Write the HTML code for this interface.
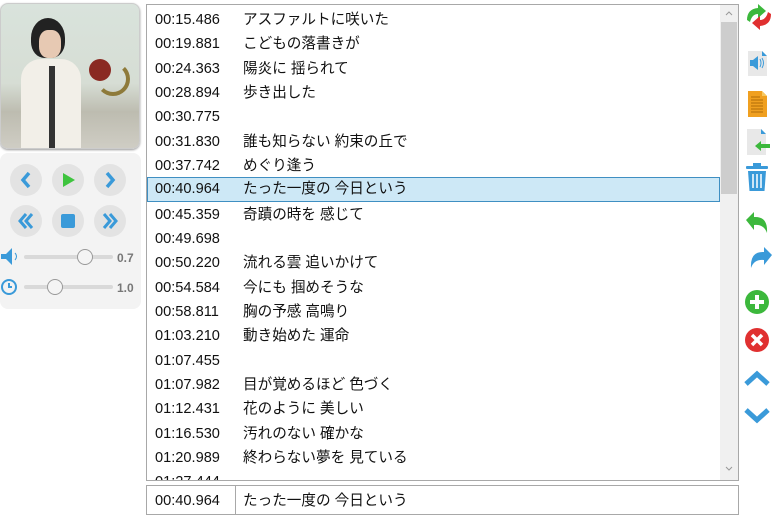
<!DOCTYPE html>
<html><head><meta charset="utf-8"><style>
*{margin:0;padding:0;box-sizing:border-box}
body{width:774px;height:518px;background:#fff;position:relative;overflow:hidden;font-family:"Liberation Sans","Noto Sans CJK JP",sans-serif;color:#111}
.art{position:absolute;left:0;top:3px;width:140px;height:146px;border-radius:8px;overflow:hidden;border:1px solid #ccc;background:linear-gradient(180deg,#d9e3dc 0%,#d6ddd4 55%,#bdbcb0 75%,#cfcdc4 100%);box-shadow:0 1px 2px #999}
.panel{position:absolute;left:0;top:153px;width:141px;height:156px;background:#f3f3f3;border-radius:8px}
.btn{position:absolute;width:32px;height:32px;border-radius:50%;background:#e3e3e3}
.list{position:absolute;left:146px;top:4px;width:593px;height:477px;border:1px solid #a8a8a8;overflow:hidden}
.rows{position:absolute;left:0;top:2px;width:573px;height:475px}
.row{position:absolute;left:0;height:24px;width:573px;font-size:14.6px;line-height:24px}
.row .t{position:absolute;left:8px}
.row .l{position:absolute;left:96px}
.sel{background:#cde8f6;border:1px solid #3f8fc2}
.sb{position:absolute;left:573px;top:0;width:18px;height:475px;background:#f0f0f0}
.thumb{position:absolute;left:1px;top:17px;width:16px;height:172px;background:#cdcdcd}
.bot{position:absolute;left:146px;top:485px;width:593px;height:30px;border:1px solid #a8a8a8;font-size:14.6px;line-height:30px}
.ic{position:absolute;left:744px}
</style></head><body>
<div class="art">
 <div style="position:absolute;left:20px;top:55px;width:60px;height:95px;background:#f2efe8;border-radius:20px 20px 0 0"></div>
 <div style="position:absolute;left:48px;top:62px;width:6px;height:90px;background:#333"></div>
 <div style="position:absolute;left:30px;top:14px;width:34px;height:40px;background:#222;border-radius:50% 50% 40% 40%"></div>
 <div style="position:absolute;left:38px;top:26px;width:22px;height:28px;background:#e7c9b3;border-radius:40%"></div>
 <div style="position:absolute;left:88px;top:55px;width:22px;height:22px;background:#8a2a22;border-radius:50%"></div>
 <div style="position:absolute;left:95px;top:58px;width:34px;height:34px;border-radius:50%;border:4px solid #8e7a3a;border-left-color:transparent;border-top-color:transparent"></div>
</div>
<div class="panel">
 <div class="btn" style="left:10px;top:11px"></div><div class="btn" style="left:52px;top:11px"></div><div class="btn" style="left:94px;top:11px"></div>
 <div class="btn" style="left:10px;top:52px"></div><div class="btn" style="left:52px;top:52px"></div><div class="btn" style="left:94px;top:52px"></div>
 <svg width="141" height="156" style="position:absolute;left:0;top:0">
  <path d="M29 20 L23 27 L29 34" fill="none" stroke="#3a9ad9" stroke-width="3.5"/>
  <path d="M63 20 L75 27 L63 34 Z" fill="#3ec43e"/>
  <path d="M107 20 L113 27 L107 34" fill="none" stroke="#3a9ad9" stroke-width="3.5"/>
  <path d="M26 61 L20 68 L26 75 M32 61 L26 68 L32 75" fill="none" stroke="#3a9ad9" stroke-width="3"/>
  <rect x="61" y="61" width="14" height="14" rx="2" fill="#3a9ad9"/>
  <path d="M104 61 L110 68 L104 75 M110 61 L116 68 L110 75" fill="none" stroke="#3a9ad9" stroke-width="3"/>
  <path d="M1 101 h5 l6 -6 v17 l-6 -6 h-5z" fill="#3a9ad9"/>
  <path d="M15 100 q3 3.5 0 7" fill="none" stroke="#3a9ad9" stroke-width="1"/>
  <line x1="26" y1="104" x2="111" y2="104" stroke="#d9d9d9" stroke-width="4" stroke-linecap="round"/>
  <circle cx="85" cy="104" r="7.5" fill="#f4f4f4" stroke="#999"/>
  <text x="117" y="109" font-size="12" font-weight="bold" fill="#777" font-family="Liberation Sans">0.7</text>
  <circle cx="9" cy="134" r="7" fill="none" stroke="#3a9ad9" stroke-width="2"/>
  <path d="M9 130 v4 h3" fill="none" stroke="#3a9ad9" stroke-width="2"/>
  <line x1="26" y1="134" x2="111" y2="134" stroke="#d9d9d9" stroke-width="4" stroke-linecap="round"/>
  <circle cx="55" cy="134" r="7.5" fill="#f4f4f4" stroke="#999"/>
  <text x="117" y="139" font-size="12" font-weight="bold" fill="#777" font-family="Liberation Sans">1.0</text>
 </svg>
</div>
<div class="list">
 <div class="rows">
 <div class="row" style="top:1px"><span class="t">00:15.486</span><span class="l">アスファルトに咲いた</span></div>
 <div class="row" style="top:25.3px"><span class="t">00:19.881</span><span class="l">こどもの落書きが</span></div>
 <div class="row" style="top:49.6px"><span class="t">00:24.363</span><span class="l">陽炎に 揺られて</span></div>
 <div class="row" style="top:74px"><span class="t">00:28.894</span><span class="l">歩き出した</span></div>
 <div class="row" style="top:98.3px"><span class="t">00:30.775</span><span class="l"></span></div>
 <div class="row" style="top:122.6px"><span class="t">00:31.830</span><span class="l">誰も知らない 約束の丘で</span></div>
 <div class="row" style="top:147px"><span class="t">00:37.742</span><span class="l">めぐり逢う</span></div>
 <div class="row sel" style="top:170.3px;height:25px;line-height:23px"><span class="t" style="left:7px">00:40.964</span><span class="l" style="left:95px">たった一度の 今日という</span></div>
 <div class="row" style="top:195.6px"><span class="t">00:45.359</span><span class="l">奇蹟の時を 感じて</span></div>
 <div class="row" style="top:220px"><span class="t">00:49.698</span><span class="l"></span></div>
 <div class="row" style="top:244.3px"><span class="t">00:50.220</span><span class="l">流れる雲 追いかけて</span></div>
 <div class="row" style="top:268.6px"><span class="t">00:54.584</span><span class="l">今にも 掴めそうな</span></div>
 <div class="row" style="top:293px"><span class="t">00:58.811</span><span class="l">胸の予感 高鳴り</span></div>
 <div class="row" style="top:317.3px"><span class="t">01:03.210</span><span class="l">動き始めた 運命</span></div>
 <div class="row" style="top:341.6px"><span class="t">01:07.455</span><span class="l"></span></div>
 <div class="row" style="top:366px"><span class="t">01:07.982</span><span class="l">目が覚めるほど 色づく</span></div>
 <div class="row" style="top:390.3px"><span class="t">01:12.431</span><span class="l">花のように 美しい</span></div>
 <div class="row" style="top:414.6px"><span class="t">01:16.530</span><span class="l">汚れのない 確かな</span></div>
 <div class="row" style="top:439px"><span class="t">01:20.989</span><span class="l">終わらない夢を 見ている</span></div>
 <div class="row" style="top:463.3px"><span class="t">01:27.444</span><span class="l"></span></div>
 </div>
 <div class="sb"><div class="thumb"></div>
  <svg width="18" height="475" style="position:absolute;left:0;top:0"><path d="M6 10 l3 -3 l3 3" fill="none" stroke="#999"/><path d="M6 462 l3 3 l3 -3" fill="none" stroke="#999"/></svg>
 </div>
</div>
<div class="bot"><span style="position:absolute;left:8px">00:40.964</span><span style="position:absolute;left:88px;top:0;width:1px;height:28px;background:#a8a8a8"></span><span style="position:absolute;left:96px">たった一度の 今日という</span></div>
<svg class="ic" width="30" height="440" style="top:0">
 <path d="M3 20 q0 -11 11 -12 l0 -4 l8 7 l-8 7 l0 -4 q-6 0 -8 8z" fill="#3cb83c"/>
 <path d="M27 14 q0 11 -11 12 l0 4 l-8 -7 l8 -7 l0 4 q6 0 8 -8z" fill="#e03030"/>
 <path d="M4 51 h14 l5 5 v20 h-19z" fill="#e8e8e8"/><path d="M18 51 l5 5 h-5z" fill="#3a9ad9"/>
 <path d="M6 60 h3 l5 -4 v14 l-5 -4 h-3z" fill="#3a9ad9"/><path d="M16 59 q2 4 0 8 M18 58 q3 5 0 10" fill="none" stroke="#3a9ad9"/>
 <path d="M4 91 h14 l5 5 v21 h-19z" fill="#f0a020"/><path d="M18 91 l5 5 h-5z" fill="#f7c860"/>
 <path d="M7 97 h9 M7 100 h12 M7 103 h12 M7 106 h12 M7 109 h12 M7 112 h12" stroke="#9a5a00" stroke-width="0.8"/>
 <path d="M3 129 h14 l5 5 v21 h-19z" fill="#e8e8e8"/><path d="M17 129 l5 5 h-5z" fill="#3a9ad9"/>
 <path d="M11 146 l6 -5 v3 h9 v4 h-9 v3z" fill="#3cb83c"/>
 <rect x="2" y="166" width="22" height="3" rx="1" fill="#3a9ad9"/><rect x="9" y="163" width="8" height="3" fill="#3a9ad9"/>
 <path d="M4 171 h18 l-1.5 20 h-15z" fill="#3a9ad9"/><path d="M9 174 v14 M13 174 v14 M17 174 v14" stroke="#fff" stroke-width="1.5"/>
 <path d="M2 220 l8 -8 v5 q14 -1 13 16 q-3 -9 -13 -8 v5z" fill="#3cb83c"/>
 <path d="M28 255 l-8 -8 v5 q-14 -1 -13 16 q3 -9 13 -8 v5z" fill="#3a9ad9"/>
 <circle cx="13" cy="302" r="12" fill="#3cb83c"/><path d="M13 295 v14 M6 302 h14" stroke="#fff" stroke-width="4"/>
 <circle cx="13" cy="340" r="12" fill="#e03030"/><path d="M8 335 l10 10 M18 335 l-10 10" stroke="#fff" stroke-width="3.5"/>
 <path d="M2 384 l11 -10 l11 10" fill="none" stroke="#3a9ad9" stroke-width="5"/>
 <path d="M2 410 l11 10 l11 -10" fill="none" stroke="#3a9ad9" stroke-width="5"/>
</svg>
</body></html>
